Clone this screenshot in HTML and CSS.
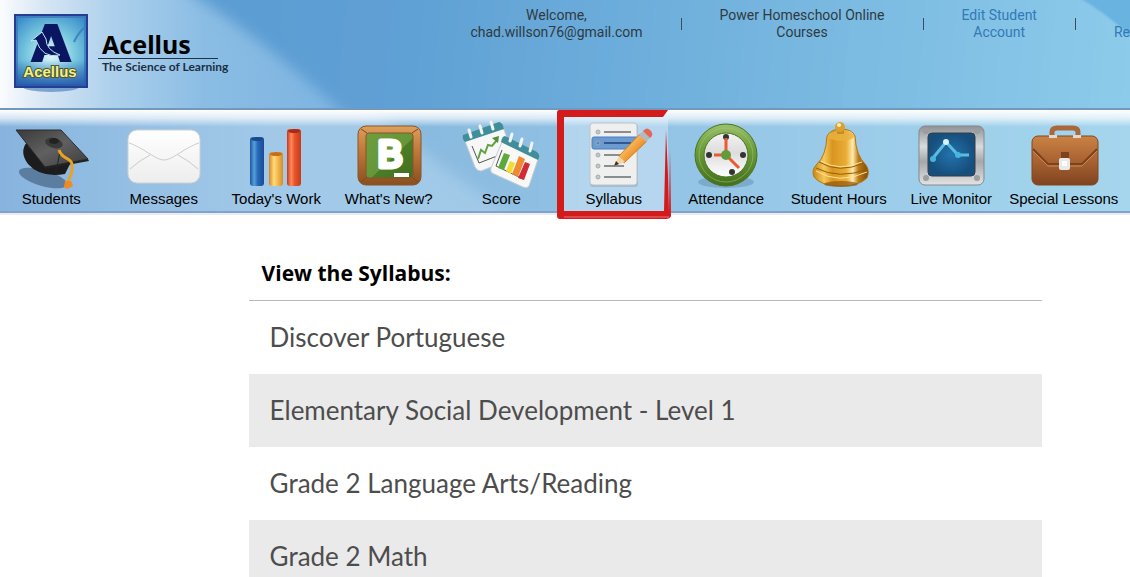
FILE: index.html
```html
<!DOCTYPE html>
<html lang="en">
<head>
    <meta charset="UTF-8">
    <meta name="viewport" content="width=device-width, initial-scale=1.0">
    <title>Acellus - Syllabus</title>
    <link rel="stylesheet" href="styles.css">
</head>
<body>
    <header class="top">
        <svg class="top-bg" viewBox="0 0 1130 108" preserveAspectRatio="none" aria-hidden="true">
            <defs>
                <linearGradient id="sky" x1="0" x2="1" y1="0" y2="0">
                    <stop offset="0" stop-color="#fbfcfe"/>
                    <stop offset=".04" stop-color="#d6e5f4"/>
                    <stop offset=".1" stop-color="#acd0ec"/>
                    <stop offset=".18" stop-color="#8bbde4"/>
                    <stop offset=".3" stop-color="#7db4e1"/>
                </linearGradient>
                <linearGradient id="deep" gradientUnits="userSpaceOnUse" x1="190" x2="1130" y1="0" y2="90">
                    <stop offset="0" stop-color="#5b9cd2"/>
                    <stop offset=".2" stop-color="#5e9fd4"/>
                    <stop offset=".5" stop-color="#6eafdc"/>
                    <stop offset=".8" stop-color="#81c0e4"/>
                    <stop offset="1" stop-color="#8dcbea"/>
                </linearGradient>
                <filter id="soft" x="-10%" y="-30%" width="120%" height="160%"><feGaussianBlur stdDeviation="7"/></filter>
                <filter id="soft2"><feGaussianBlur stdDeviation="1"/></filter>
            </defs>
            <rect width="1130" height="108" fill="url(#sky)"/>
            <path d="M170-20 Q262 36 362 130 H1180 V-20z" fill="url(#deep)" filter="url(#soft)"/>
            <path d="M1076-4 Q1106 12 1134 40 V-4z" fill="#69b3e0" filter="url(#soft2)"/>
        </svg>
        <a class="brand" href="#">
            <svg class="logo" viewBox="0 0 74 80" aria-hidden="true">
                <defs>
                    <radialGradient id="lg" cx=".5" cy=".55" r=".65">
                        <stop offset="0" stop-color="#e4f8fb"/>
                        <stop offset=".5" stop-color="#7ccbe0"/>
                        <stop offset="1" stop-color="#3b8fca"/>
                    </radialGradient>
                    <linearGradient id="floor" x1="0" x2="0" y1="0" y2="1">
                        <stop offset="0" stop-color="#2456a8" stop-opacity="0"/>
                        <stop offset="1" stop-color="#2456a8"/>
                    </linearGradient>
                </defs>
                <ellipse cx="37" cy="73" rx="28" ry="5" fill="#3f78b5" opacity=".6"/>
                <rect x="1" y="1" width="72" height="72" fill="url(#lg)" stroke="#263d96" stroke-width="2"/>
                <rect x="3" y="3" width="68" height="68" fill="none" stroke="#3b72b8" stroke-width="2" opacity=".7"/>
                <path d="M2 46 H72 V72 H2z" fill="url(#floor)" opacity=".9"/>
                <path d="M60 28 q4-9 11-15" fill="none" stroke="#3a86bd" stroke-width="2"/>
                <text class="logo-a" x="37" y="47" text-anchor="middle">A</text>
                <path d="M17 27 L28 18 L32 25 Q32 36 46 41 Q28 45 22 26z" fill="#0b1663" stroke="#bfe9f3" stroke-width="1"/>
                <text class="logo-name" x="36" y="63" text-anchor="middle">Acellus</text>
            </svg>
            <span class="brand-text">
                <strong>Acellus</strong>
                <small>The Science of Learning</small>
            </span>
        </a>
        <ul class="account">
            <li>Welcome,<br>chad.willson76@gmail.com</li>
            <li class="sep"></li>
            <li>Power Homeschool Online<br>Courses</li>
            <li class="sep"></li>
            <li><a href="#">Edit Student<br>Account</a></li>
            <li class="sep"></li>
            <li><a href="#"><br>Re</a></li>
        </ul>
    </header>

    <nav class="menu">
        <svg class="menu-bg" viewBox="0 0 1130 102" preserveAspectRatio="none" aria-hidden="true">
            <defs>
                <linearGradient id="bar" x1="0" x2="1" y1="0" y2="0">
                    <stop offset="0" stop-color="#87b3de"/>
                    <stop offset=".1" stop-color="#93bee3"/>
                    <stop offset=".25" stop-color="#a2c9e8"/>
                    <stop offset=".5" stop-color="#a0c9e8"/>
                </linearGradient>
                <linearGradient id="bar2" x1="0" x2="1" y1="0" y2="0">
                    <stop offset="0" stop-color="#86b8de"/>
                    <stop offset=".3" stop-color="#92c2e4"/>
                    <stop offset="1" stop-color="#a6d7ee"/>
                </linearGradient>
                <linearGradient id="shine" x1="0" x2="0" y1="0" y2="1">
                    <stop offset="0" stop-color="#fff"/>
                    <stop offset=".5" stop-color="#fff" stop-opacity=".65"/>
                    <stop offset="1" stop-color="#fff" stop-opacity="0"/>
                </linearGradient>
            </defs>
            <rect width="1130" height="102" fill="url(#bar)"/>
            <path d="M370-10 Q430 60 540 120 H1160 V-10z" fill="url(#bar2)" filter="url(#soft)"/>
            <rect width="1130" height="17" fill="url(#shine)"/>
        </svg>
        <ul>
            <li><a href="#">
                <svg viewBox="0 0 80 72" aria-hidden="true">
                    <defs>
                        <linearGradient id="cap" x1="0" y1="0" x2="1" y2="1"><stop offset="0" stop-color="#3a3a3a"/><stop offset=".5" stop-color="#606060"/><stop offset="1" stop-color="#3c3c3c"/></linearGradient>
                    </defs>
                    <ellipse cx="32" cy="60" rx="25" ry="8" transform="rotate(16 32 60)" fill="#4f6f90" opacity=".8"/>
                    <path d="M16 24 Q8 34 17 46 Q29 60 54 56 L60 44z" fill="#1c1c1e"/>
                    <path d="M5 12 H50 L77 41 34 49z" fill="url(#cap)" stroke="#2c2c2e"/>
                    <path d="M34 49 L77 41 78 43 34 51z" fill="#222"/>
                    <ellipse cx="43" cy="25" rx="9" ry="5" fill="#3a3a3c" transform="rotate(15 43 25)"/>
                    <ellipse cx="43" cy="23" rx="5" ry="3" fill="#222"/>
                    <path d="M49 33 Q47 47 44 55" fill="none" stroke="#222" stroke-width="1"/>
                    <path d="M48 32 C52 44 63 37 61 52 C60 60 57 60 57 66" fill="none" stroke="#e8a224" stroke-width="3"/>
                    <path d="M54 63 L60 63 62 68 56 71 53 69z" fill="#f08a24"/>
                </svg>
                <span>Students</span></a></li>
            <li><a href="#">
                <svg viewBox="0 0 80 72" aria-hidden="true">
                    <defs><linearGradient id="env" x1="0" y1="0" x2="0" y2="1"><stop offset="0" stop-color="#fff"/><stop offset="1" stop-color="#ededee"/></linearGradient></defs>
                    <rect x="4" y="12" width="72" height="53" rx="9" fill="url(#env)" stroke="#cfd0d2"/>
                    <path d="M5 25 Q12 27 26 36 Q35 42 40 42 Q45 42 54 36 Q68 27 75 25" fill="none" stroke="#cdcdce" stroke-width="1"/>
                    <path d="M6 51 Q16 42 26 37 M74 51 Q64 42 54 37" fill="none" stroke="#c9c9ca" stroke-width="1"/>
                </svg>
                <span>Messages</span></a></li>
            <li><a href="#">
                <svg viewBox="0 0 80 72" aria-hidden="true">
                    <defs>
                        <linearGradient id="bb"><stop offset="0" stop-color="#1b579f"/><stop offset=".3" stop-color="#55a0dc"/><stop offset=".55" stop-color="#2769b7"/><stop offset="1" stop-color="#1b4a92"/></linearGradient>
                        <linearGradient id="by"><stop offset="0" stop-color="#d88320"/><stop offset=".35" stop-color="#ffdb78"/><stop offset="1" stop-color="#dc8b20"/></linearGradient>
                        <linearGradient id="br"><stop offset="0" stop-color="#c6381c"/><stop offset=".3" stop-color="#ff8a5c"/><stop offset=".55" stop-color="#ea5428"/><stop offset="1" stop-color="#c23b19"/></linearGradient>
                    </defs>
                    <rect x="14" y="19" width="14" height="49" rx="3" fill="url(#bb)"/>
                    <ellipse cx="21" cy="21" rx="6" ry="2" fill="#174b8d"/>
                    <rect x="33" y="34" width="14" height="34" rx="3" fill="url(#by)"/>
                    <ellipse cx="40" cy="36" rx="6" ry="2" fill="#c46d1c"/>
                    <rect x="51" y="11" width="14" height="57" rx="3" fill="url(#br)"/>
                    <ellipse cx="58" cy="13" rx="6" ry="2" fill="#a82a17"/>
                </svg>
                <span>Today's Work</span></a></li>
            <li><a href="#">
                <svg viewBox="0 0 80 72" aria-hidden="true">
                    <defs>
                        <linearGradient id="wood" x1="0" y1="0" x2="0" y2="1"><stop offset="0" stop-color="#dc9f5c"/><stop offset=".4" stop-color="#c17a3b"/><stop offset="1" stop-color="#8a4f20"/></linearGradient>
                        <linearGradient id="grn" x1="0" y1="0" x2="1" y2="1"><stop offset="0" stop-color="#6e9e3c"/><stop offset=".55" stop-color="#65963a"/><stop offset=".56" stop-color="#4b7d27"/><stop offset="1" stop-color="#416f20"/></linearGradient>
                    </defs>
                    <rect x="9" y="8" width="63" height="59" rx="8" fill="url(#wood)" stroke="#8d5426"/>
                    <path d="M12 11 L18 15 M69 11 L63 15 M12 64 L18 59 M69 64 L63 59" stroke="#804719"/>
                    <rect x="17" y="15" width="47" height="45" rx="3" fill="url(#grn)" stroke="#8a542a"/>
                    <text class="blog-b" x="41" y="49" text-anchor="middle">B</text>
                    <rect x="45" y="55" width="15" height="4" fill="#fff"/>
                </svg>
                <span>What's New?</span></a></li>
            <li><a href="#">
                <svg viewBox="0 0 80 72" aria-hidden="true">
                    <path d="M4 23 L42 9 52 37 Q52 41 48 42 L20 53 Q16 53 14 49z" fill="#f6f7f6" stroke="#c5ced3"/>
                    <path d="M2 17 L38 4 Q42 5 43 11 L4 24 Q1 21 2 17z" fill="#418e9b"/>
                    <path d="M8 12 L10 19 M19 8 L21 15 M30 4 L32 11" stroke="#f3f3f3" stroke-width="3" stroke-linecap="round"/>
                    <path d="M11 28 L18 45 36 38" fill="none" stroke="#555" stroke-width="1"/>
                    <path d="M17 41 L20 32 24 35 27 27 31 28 36 22" fill="none" stroke="#64a044" stroke-width="2"/>
                    <path d="M31 20 L38 18 37 25z" fill="#4e9138"/>
                    <path d="M41 24 L77 41 68 68 Q66 71 62 69 L31 55 Q29 53 30 50z" fill="#f8f8f7" stroke="#c5ced3"/>
                    <path d="M44 18 L76 34 Q80 37 77 42 L40 24 Q41 18 44 18z" fill="#418e9b"/>
                    <path d="M51 16 L49 23 M61 21 L59 28 M71 25 L69 33" stroke="#f3f3f3" stroke-width="3" stroke-linecap="round"/>
                    <path d="M41 32 L35 48 62 61" fill="none" stroke="#555" stroke-width="1"/>
                    <path d="M43 35 L49 37 43 52 37 50z" fill="#5caa3d"/>
                    <path d="M49 43 L54 45 50 56 45 53z" fill="#f1dd35"/>
                    <path d="M58 38 L64 41 57 59 51 56z" fill="#ef8a31"/>
                    <path d="M64 44 L69 46 63 62 57 60z" fill="#cf2c38"/>
                </svg>
                <span>Score</span></a></li>
            <li>
                <!-- red marker round the current page -->
                <svg class="marker" viewBox="0 0 116 110" aria-hidden="true">
                    <rect x="7" y="7" width="105" height="95" fill="#e6f3fc" opacity=".4"/>
                    <path d="M3 0 H112 L107 7 H8 V101 H108 L109 58 110 20 112 65 113 103 L114 40 115 106 Q114 109 110 109 H4 Q1 109 1 106 V3 Q1 0 3 0z" fill="#d41b1c"/>
                    <path d="M8 107 H113" fill="none" stroke="#e87373" stroke-width="1"/>
                </svg>
                <a href="#">
                <svg viewBox="0 0 80 72" aria-hidden="true">
                    <defs><linearGradient id="pen" x1="0" y1="0" x2="1" y2="1"><stop offset=".3" stop-color="#ffc269"/><stop offset=".7" stop-color="#e6851b"/></linearGradient></defs>
                    <rect x="16" y="6" width="48" height="63" rx="3" fill="#9fb0bd" opacity=".7"/>
                    <rect x="16" y="5" width="47" height="62" rx="3" fill="#eeefee" stroke="#bcc3c6"/>
                    <rect x="18" y="19" width="46" height="12" rx="2" fill="#6c9bd2" stroke="#4a7fc0"/>
                    <g fill="#c3c7c9" stroke="#a5abae"><circle cx="24" cy="14" r="2"/><circle cx="24" cy="25" r="2" fill="#5585bf"/><circle cx="24" cy="37" r="2"/><circle cx="24" cy="48" r="2"/><circle cx="24" cy="59" r="2"/></g>
                    <path d="M30 14 H57 M30 37 H50 M30 48 H50 M30 59 H57" stroke="#8b8d8e" stroke-width="2"/>
                    <path d="M30 25 H57" stroke="#31598f" stroke-width="2"/>
                    <path d="M45 38 L66 16 73 23 50 45z" fill="url(#pen)" stroke="#d08024"/>
                    <path d="M40 48 L45 38 51 44z" fill="#f2d6a6"/>
                    <path d="M40 48 L42 43 45 46z" fill="#333"/>
                    <path d="M65 17 L69 13 76 20 72 24z" fill="#b4b9bd"/>
                    <path d="M69 13 Q73 8 77 13 Q80 17 76 20z" fill="#e2674f"/>
                </svg>
                <span>Syllabus</span></a></li>
            <li><a href="#">
                <svg viewBox="0 0 80 72" aria-hidden="true">
                    <defs>
                        <linearGradient id="ring" x1="0" y1="0" x2="0" y2="1"><stop offset="0" stop-color="#9ac06c"/><stop offset=".4" stop-color="#6c9e39"/><stop offset="1" stop-color="#446f1c"/></linearGradient>
                        <linearGradient id="face" x1="0" y1="0" x2="0" y2="1"><stop offset="0" stop-color="#f3f3f3"/><stop offset=".45" stop-color="#dcdddc"/><stop offset="1" stop-color="#fff"/></linearGradient>
                    </defs>
                    <ellipse cx="40" cy="64" rx="28" ry="6" fill="#628fb3" opacity=".5"/>
                    <circle cx="40" cy="37" r="31" fill="url(#ring)" stroke="#4a7422"/>
                    <circle cx="40" cy="37" r="27" fill="none" stroke="#a7cb7d" opacity=".5"/>
                    <circle cx="40" cy="37" r="22" fill="url(#face)" stroke="#4c7622"/>
                    <g fill="#333"><circle cx="23" cy="37" r="3"/><circle cx="57" cy="37" r="3"/><circle cx="46" cy="54" r="3"/><circle cx="40" cy="19" r="3"/></g>
                    <path d="M40 37 V20 M40 37 H28 M40 37 L53 50" stroke="#eb5b30" stroke-width="3"/>
                    <circle cx="40" cy="37" r="5" fill="#639b38"/>
                </svg>
                <span>Attendance</span></a></li>
            <li><a href="#">
                <svg viewBox="0 0 80 72" aria-hidden="true">
                    <defs><linearGradient id="gold"><stop offset="0" stop-color="#c98618"/><stop offset=".2" stop-color="#f5c858"/><stop offset=".35" stop-color="#d9951f"/><stop offset=".6" stop-color="#e9ad35"/><stop offset=".72" stop-color="#ffebae"/><stop offset=".82" stop-color="#bd7c14"/><stop offset="1" stop-color="#7e4908"/></linearGradient></defs>
                    <path d="M28 18 Q32 11 42 11 Q53 11 56 18 Q57 38 67 47 Q71 53 68 60 Q60 68 42 68 Q22 68 15 59 Q12 52 18 46 Q27 38 28 18z" fill="url(#gold)" stroke="#b27816"/>
                    <ellipse cx="42" cy="18" rx="13" ry="5" fill="#e9b23e" opacity=".8"/>
                    <path d="M20 44 Q40 56 65 45 M17 50 Q40 62 69 51" fill="none" stroke="#955d0c" stroke-width="1"/>
                    <path d="M22 43 Q40 54 63 44 M17 53 Q40 67 68 54" fill="none" stroke="#ffe292" stroke-width="1"/>
                    <ellipse cx="42" cy="66" rx="17" ry="3" fill="#8f560f" opacity=".7"/>
                    <rect x="38" y="11" width="7" height="5" fill="#c88a22"/>
                    <circle cx="41" cy="9" r="5" fill="#dba030"/>
                    <circle cx="40" cy="7" r="2" fill="#fff0bb"/>
                </svg>
                <span>Student Hours</span></a></li>
            <li><a href="#">
                <svg viewBox="0 0 80 72" aria-hidden="true">
                    <defs>
                        <linearGradient id="steel" x1="0" y1="0" x2="0" y2="1"><stop offset="0" stop-color="#8f9295"/><stop offset=".35" stop-color="#d9dadb"/><stop offset=".6" stop-color="#a5a7a9"/><stop offset="1" stop-color="#e3e3e4"/></linearGradient>
                        <radialGradient id="scr"><stop offset="0" stop-color="#2374ae"/><stop offset="1" stop-color="#164e7c"/></radialGradient>
                    </defs>
                    <rect x="8" y="8" width="65" height="59" rx="6" fill="url(#steel)" stroke="#85898d"/>
                    <g fill="#9b9d9f"><circle cx="15" cy="13" r="3"/><circle cx="66" cy="13" r="3"/><circle cx="15" cy="60" r="3"/><circle cx="66" cy="60" r="3"/></g>
                    <rect x="17" y="15" width="47" height="43" rx="4" fill="url(#scr)" stroke="#333f4a"/>
                    <path d="M22 40 L35 24 47 37 H58" fill="none" stroke="#5bbcdf" stroke-width="3"/>
                    <circle cx="22" cy="41" r="3" fill="#47b5df"/><circle cx="35" cy="24" r="3" fill="#d6f2fb"/><circle cx="47" cy="37" r="3" fill="#47b5df"/>
                </svg>
                <span>Live Monitor</span></a></li>
            <li><a href="#">
                <svg viewBox="0 0 80 72" aria-hidden="true">
                    <defs><linearGradient id="bag" x1="0" y1="0" x2="0" y2="1"><stop offset="0" stop-color="#c98344"/><stop offset=".5" stop-color="#aa6232"/><stop offset="1" stop-color="#7f4420"/></linearGradient></defs>
                    <path d="M28 19 V14 Q28 10 33 10 H49 Q54 10 54 14 V19" fill="none" stroke="#a9673a" stroke-width="5"/>
                    <rect x="8" y="18" width="66" height="49" rx="6" fill="url(#bag)" stroke="#83461f"/>
                    <path d="M9 31 L24 46 H58 L73 31" fill="none" stroke="#7c421d" stroke-width="2"/>
                    <path d="M9 33 L24 48 H58 L73 33" fill="none" stroke="#c98a55" stroke-width="1"/>
                    <path d="M25 17 h8 v3 h-8z M49 17 h8 v3 h-8z" fill="#dfd9d2"/>
                    <rect x="37" y="34" width="8" height="6" fill="#7e431c"/>
                    <rect x="35" y="40" width="11" height="12" rx="2" fill="#e9e9e9"/>
                    <rect x="38" y="43" width="5" height="5" fill="#fff"/>
                    <path d="M37 53 H44 L42 58 H39z" fill="#8f5329"/>
                </svg>
                <span>Special Lessons</span></a></li>
        </ul>
    </nav>

    <main>
        <h1>View the Syllabus:</h1>
        <ul class="courses">
            <li><a href="#">Discover Portuguese</a></li>
            <li><a href="#">Elementary Social Development - Level 1</a></li>
            <li><a href="#">Grade 2 Language Arts/Reading</a></li>
            <li><a href="#">Grade 2 Math</a></li>
        </ul>
    </main>
</body>
</html>
```
FILE: styles.css
```css
* {
    box-sizing: border-box;
}
body {
    font-family: "Liberation Sans", Arial, sans-serif;
    margin: 0;
    height: 100vh;
    overflow: hidden auto;
    scrollbar-width: none;
    background-color: #fff;
    color: #000;
}
ul {
    list-style: none;
    margin: 0;
    padding: 0;
}
a {
    color: inherit;
    text-decoration: none;
}

/* header */
.top {
    position: relative;
    display: flex;
    justify-content: space-between;
    align-items: flex-start;
    min-height: 110px;
    border-bottom: 2px solid #7398c0;
}
.top-bg,
.menu-bg {
    position: absolute;
    top: 0;
    left: 0;
    width: 100%;
    height: 100%;
    z-index: -1;
}
.brand {
    display: flex;
    gap: 10px;
    padding: 14px 0 0 14px;
}
.logo {
    width: 74px;
    height: 80px;
}
.logo-a {
    font: bold 50px "DejaVu Sans", sans-serif;
    fill: #0b1663;
    stroke: #0b1663;
    stroke-width: 2px;
}
.logo-name {
    font: bold 15px "Liberation Sans", sans-serif;
    fill: #f5f08a;
    stroke: #4b5a30;
    stroke-width: 2px;
    paint-order: stroke;
}
.brand-text {
    display: flex;
    flex-direction: column;
    padding-top: 16px;
}
.brand-text strong {
    font: bold 25px/28px "Noto Sans", sans-serif;
    padding-left: 4px;
    margin-right: 10px;
    border-bottom: 1px solid #1d3348;
}
.brand-text small {
    font: bold 12px/16px Lato, sans-serif;
    color: #1c2f42;
    padding-left: 4px;
}
.account {
    display: flex;
    gap: 38px;
    padding-top: 7px;
    font: 14px/17px Roboto, sans-serif;
    color: #2f3a42;
    text-align: center;
    white-space: nowrap;
}
.account a {
    color: #3279b7;
}
.sep {
    width: 1px;
    height: 12px;
    margin-top: 11px;
    background-color: #3b4c58;
}

/* icon menu */
.menu {
    position: relative;
    border-bottom: 2px solid #7fa3cd;
    box-shadow: 0 2px 0 #ececef;
}
.menu ul {
    display: grid;
    grid-template-columns: repeat(10, 1fr);
    margin: 0 10px 0 -5px;
}
.menu li {
    position: relative;
}
.menu a {
    position: relative;
    display: flex;
    flex-direction: column;
    align-items: center;
    padding: 8px 0 3px;
    font-size: 15px;
    line-height: 18px;
    white-space: nowrap;
}
.menu a svg {
    width: 80px;
    height: 72px;
}
.blog-b {
    font: 37px "Liberation Sans", sans-serif;
    fill: #fff;
    stroke: #fff;
    stroke-width: 5px;
    stroke-linejoin: round;
}
.marker {
    position: absolute;
    top: 0;
    left: -2px;
    width: 116px;
    height: 110px;
}

/* course list */
main {
    margin: 0 88px 0 22%;
    padding-top: 43px;
}
h1 {
    font: bold 21px/34px "Open Sans", sans-serif;
    margin: 0;
    padding: 0 13px 10px;
    border-bottom: 1px solid #b8b8b8;
}
.courses a {
    display: block;
    padding: 19px 21px 20px;
    font: 26px/34px Lato, sans-serif;
    color: #4d4d4d;
}
.courses li:nth-child(even) {
    background-color: #eaeaea;
}
```
